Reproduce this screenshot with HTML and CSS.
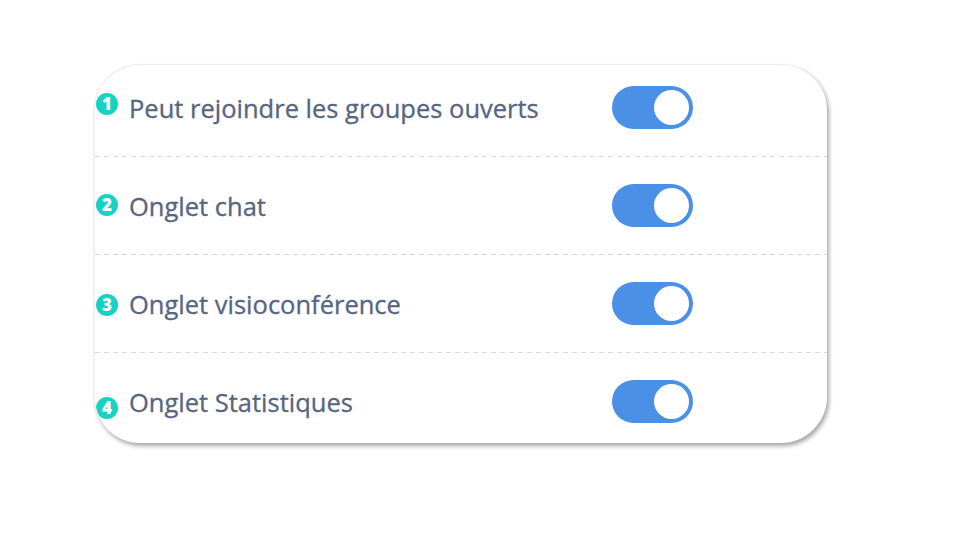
FILE: index.html
```html
<!DOCTYPE html>
<html lang="fr">
<head>
<meta charset="utf-8">
<link rel="stylesheet" href="styles.css">
</head>
<body>
<div class="page">
  <div class="card">
    <div class="list">
      <div class="row">
        <span class="badge">1</span>
        <span class="label">Peut rejoindre les groupes ouverts</span>
        <span class="toggle"><span class="knob"></span></span>
      </div>
      <div class="row">
        <span class="badge">2</span>
        <span class="label">Onglet chat</span>
        <span class="toggle"><span class="knob"></span></span>
      </div>
      <div class="row">
        <span class="badge">3</span>
        <span class="label">Onglet visioconférence</span>
        <span class="toggle"><span class="knob"></span></span>
      </div>
      <div class="row last">
        <span class="badge">4</span>
        <span class="label">Onglet Statistiques</span>
        <span class="toggle"><span class="knob"></span></span>
      </div>
    </div>
  </div>
</div>
</body>
</html>
```

FILE: styles.css
```css
html, body {
  margin: 0;
  padding: 0;
  background: #ffffff;
}
.page {
  width: 960px;
  height: 540px;
  padding: 64px 0 0 94px;
  box-sizing: border-box;
}
.card {
  width: 733px;
  height: 379px;
  box-sizing: border-box;
  border-radius: 46px;
  border-top: 1px solid #ececec;
  border-left: 1px solid #efefef;
  background: #fff;
  box-shadow: 2px 3px 4px rgba(0, 0, 0, 0.35);
  overflow: hidden;
}
.list {
  margin-top: -6px;
}
.row {
  position: relative;
  height: 98px;
  display: flex;
  align-items: center;
  box-sizing: border-box;
  padding-bottom: 1px;
  background-image: linear-gradient(to right, #d9d9d9 60%, transparent 60%);
  background-size: 9px 1.5px;
  background-repeat: repeat-x;
  background-position: 0 bottom;
}
.row.last {
  background-image: none;
}
.label {
  font-family: "Open Sans", "Noto Sans", sans-serif;
  font-size: 25.5px;
  font-weight: 400;
  color: #566580;
  margin-left: 34px;
  width: 483px;
  -webkit-text-stroke: 0.3px #566580;
}
.badge {
  position: absolute;
  left: 1px;
  top: 34px;
  width: 22px;
  height: 22px;
  border-radius: 50%;
  background: #16d2c4;
  color: #fff;
  font-family: "Open Sans", sans-serif;
  font-weight: 800;
  font-size: 17px;
  line-height: 22px;
  text-align: center;
}
.row.last .badge {
  top: 44px;
}
.row:nth-child(2) .badge { top: 37px; }
.row:nth-child(3) .badge { top: 39px; }
.toggle {
  width: 81px;
  height: 43px;
  border-radius: 22px;
  background: #4a90e6;
  display: flex;
  align-items: center;
  justify-content: flex-end;
  padding-right: 4px;
  box-sizing: border-box;
}
.knob {
  width: 35px;
  height: 35px;
  border-radius: 50%;
  background: #fff;
}
```
